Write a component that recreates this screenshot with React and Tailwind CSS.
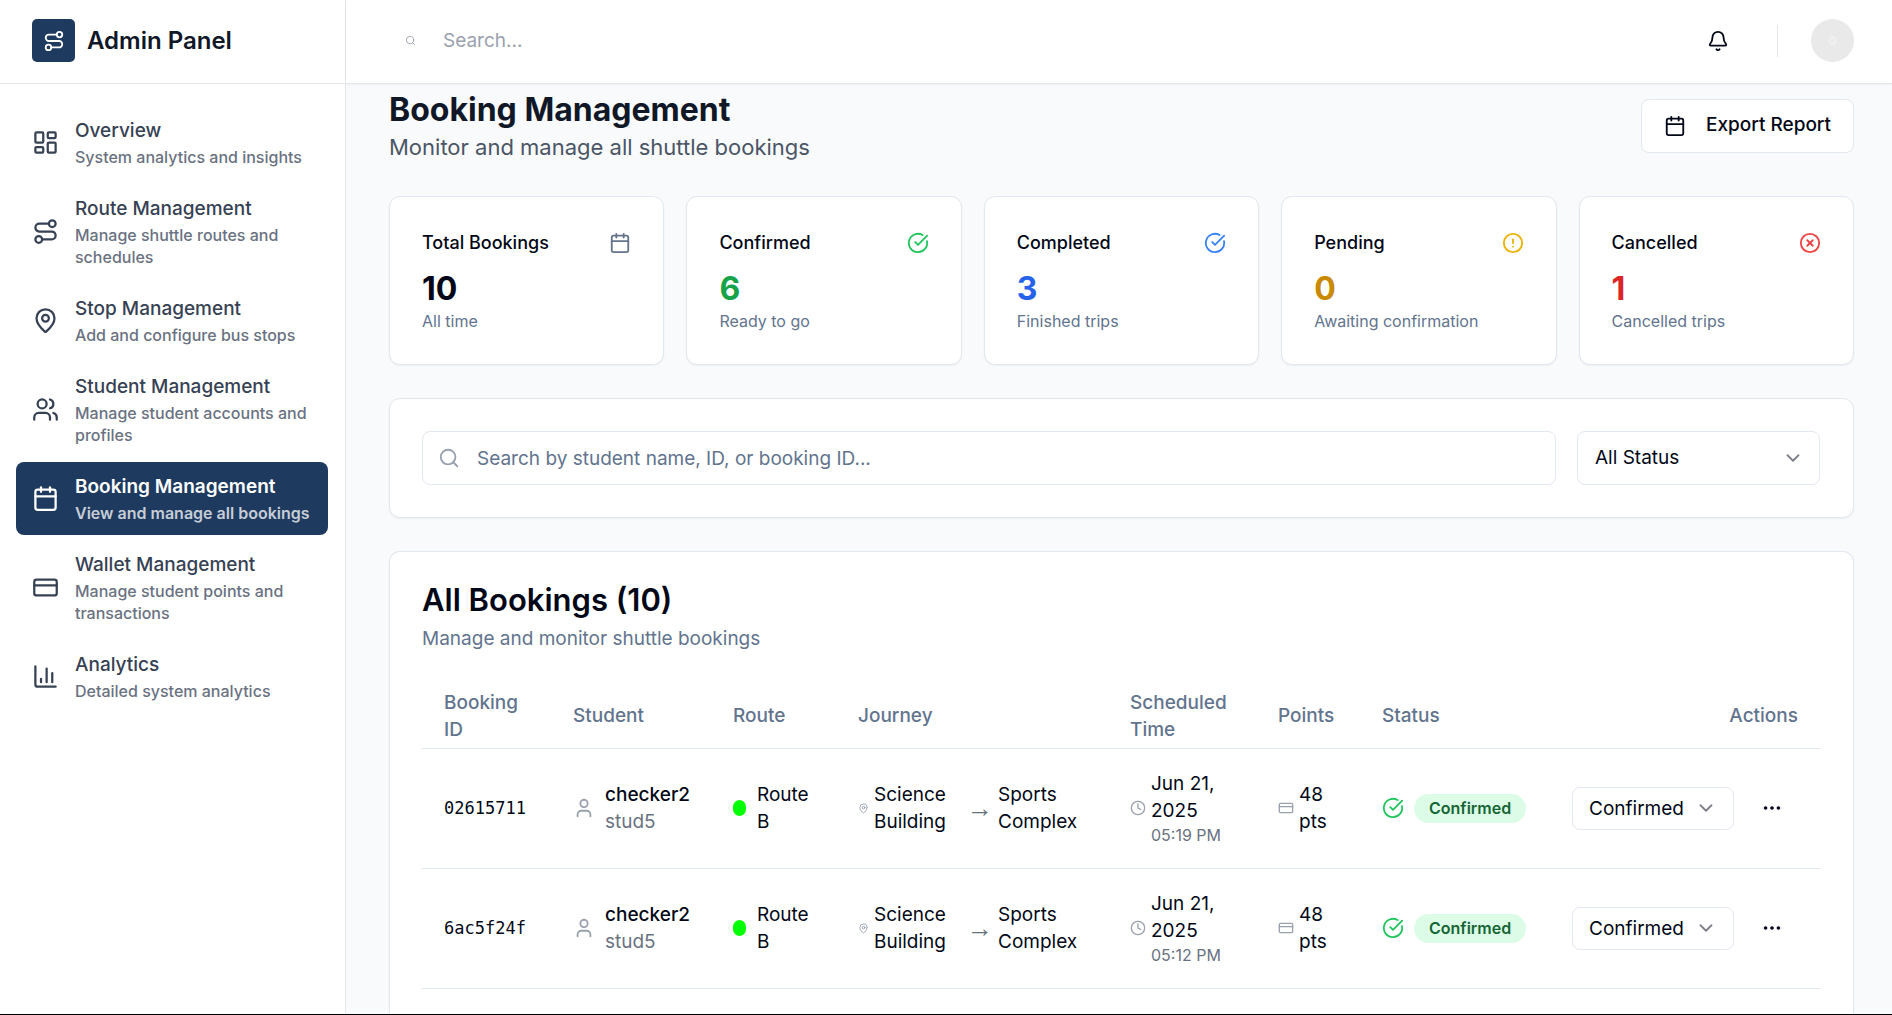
import React from "react";
import {
  LayoutDashboard,
  Route,
  MapPin,
  Users,
  User,
  Calendar,
  CreditCard,
  ChartColumn,
  Search,
  Bell,
  CircleCheckBig,
  CircleAlert,
  CircleX,
  ChevronDown,
  Clock,
  Ellipsis,
} from "lucide-react";

const NAV = [
  { title: "Overview", text: "System analytics and insights", icon: LayoutDashboard },
  { title: "Route Management", text: "Manage shuttle routes and schedules", icon: Route },
  { title: "Stop Management", text: "Add and configure bus stops", icon: MapPin },
  { title: "Student Management", text: "Manage student accounts and profiles", icon: Users },
  { title: "Booking Management", text: "View and manage all bookings", icon: Calendar, active: true },
  { title: "Wallet Management", text: "Manage student points and transactions", icon: CreditCard },
  { title: "Analytics", text: "Detailed system analytics", icon: ChartColumn },
];

const STATS = [
  { title: "Total Bookings", value: "10", note: "All time", icon: Calendar, iconColor: "text-[#64748b]", color: "text-[#020817]" },
  { title: "Confirmed", value: "6", note: "Ready to go", icon: CircleCheckBig, iconColor: "text-[#22c55e]", color: "text-[#16a34a]" },
  { title: "Completed", value: "3", note: "Finished trips", icon: CircleCheckBig, iconColor: "text-[#3b82f6]", color: "text-[#2563eb]" },
  { title: "Pending", value: "0", note: "Awaiting confirmation", icon: CircleAlert, iconColor: "text-[#eab308]", color: "text-[#ca8a04]" },
  { title: "Cancelled", value: "1", note: "Cancelled trips", icon: CircleX, iconColor: "text-[#ef4444]", color: "text-[#dc2626]" },
];

const BOOKINGS = [
  { id: "02615711", name: "checker2", student: "stud5", route: "Route B", from: "Science Building", to: "Sports Complex", date: "Jun 21, 2025", time: "05:19 PM", points: 48 },
  { id: "6ac5f24f", name: "checker2", student: "stud5", route: "Route B", from: "Science Building", to: "Sports Complex", date: "Jun 21, 2025", time: "05:12 PM", points: 48 },
];

const COLUMNS = [
  { label: "Booking ID", width: "w-[129px]" },
  { label: "Student", width: "w-[160px]" },
  { label: "Route", width: "w-[125px]" },
  { label: "Journey", width: "w-auto" },
  { label: "Scheduled Time", width: "w-[148px]" },
  { label: "Points", width: "w-[104px]" },
  { label: "Status", width: "w-[190px]" },
  { label: "Actions", width: "w-[270px]", right: true },
];

function Sidebar() {
  return (
    <aside className="flex w-[346px] shrink-0 flex-col border-r border-gray-200 bg-white">
      <div className="flex h-[84px] shrink-0 items-center gap-3 border-b border-gray-200 px-8 pb-[2px]">
        <div className="flex size-[43px] items-center justify-center rounded-[5px] bg-[#1e3a5f] text-white">
          <Route size={22} />
        </div>
        <span className="text-[24px] leading-8 font-semibold text-gray-900">Admin Panel</span>
      </div>
      <nav aria-label="Admin" className="flex flex-col gap-[5px] px-4 pt-[22px] pr-[17px]">
        {NAV.map(({ title, text, icon: Icon, active }) => (
          <a
            key={title}
            href="#"
            aria-current={active ? "page" : undefined}
            className={
              "flex items-center gap-4 rounded-lg py-[11px] pl-4 " +
              (active ? "bg-[#1e3a5f] text-white font-semibold" : "text-gray-700 font-medium")
            }
          >
            <Icon size={27} className="shrink-0" />
            <span className="flex min-w-0 flex-1 flex-col gap-[2px]">
              <span className="text-[19px] leading-[27px]">{title}</span>
              <span className={"text-[16px] leading-[22px] " + (active ? "text-white/75" : "text-gray-500")}>
                {text}
              </span>
            </span>
          </a>
        ))}
      </nav>
    </aside>
  );
}

function TopBar() {
  return (
    <header className="z-10 flex h-[84px] shrink-0 items-center border-b border-gray-200 bg-white pr-[38px] pb-[2px] pl-[59px] shadow-xs">
      <label className="flex flex-1 items-center gap-[27px] text-gray-400">
        <Search size={11} className="shrink-0" />
        <input
          type="text"
          aria-label="Search"
          placeholder="Search..."
          className="w-full bg-transparent text-[19px] leading-[27px] outline-none placeholder:text-gray-400"
        />
      </label>
      <div className="flex items-center">
        <button type="button" aria-label="Notifications" className="flex size-[54px] items-center justify-center text-[#020817]">
          <Bell size={22} />
        </button>
        <div className="mr-[33px] ml-8 h-8 w-px bg-gray-200" />
        <button type="button" aria-label="Account" className="flex size-[43px] items-center justify-center rounded-full bg-[#e9e9e9]">
          <span className="size-[9px] rounded-full border-[3px] border-[#efefef]" />
        </button>
      </div>
    </header>
  );
}

function StatCard({ title, value, note, icon: Icon, iconColor, color }) {
  return (
    <div className="rounded-[11px] border border-slate-200 bg-white p-8 shadow-xs">
      <div className="flex items-center justify-between pb-[11px]">
        <h3 className="text-[18px] leading-[27px] font-medium text-[#020817]">{title}</h3>
        <Icon size={22} className={iconColor} />
      </div>
      <p className={"text-[32px] leading-[43px] font-bold " + color}>{value}</p>
      <p className="text-[16px] leading-[22px] text-slate-500">{note}</p>
    </div>
  );
}

function BookingRow({ b }) {
  return (
    <tr className="h-[120px] border-b border-slate-200">
      <td className="px-[22px] font-['DejaVu_Sans_Mono',monospace] text-[17px]">{b.id}</td>
      <td className="px-[22px]">
        <div className="flex items-center gap-[10px]">
          <User size={22} className="shrink-0 text-gray-400" />
          <div>
            <p className="font-medium">{b.name}</p>
            <p className="text-gray-500">{b.student}</p>
          </div>
        </div>
      </td>
      <td className="px-[22px]">
        <div className="flex items-center gap-[11px]">
          <span className="h-4 w-[13px] shrink-0 rounded-full bg-[#00ff00]" />
          <span className="w-[60px]">{b.route}</span>
        </div>
      </td>
      <td className="px-[22px]">
        <div className="flex items-center gap-[5px]">
          <MapPin size={11} className="shrink-0 text-gray-400" />
          <span className="w-[88px] shrink-0">{b.from}</span>
          <span className="w-[26px] shrink-0 font-['Liberation_Sans',sans-serif] text-[26px] text-gray-500">→</span>
          <span>{b.to}</span>
        </div>
      </td>
      <td className="px-[22px]">
        <div className="flex items-center gap-[5px]">
          <Clock size={16} className="shrink-0 text-gray-400" />
          <div>
            <p>{b.date}</p>
            <p className="text-[16px] leading-[22px] text-gray-500">{b.time}</p>
          </div>
        </div>
      </td>
      <td className="px-[22px]">
        <div className="flex items-center gap-[5px]">
          <CreditCard size={16} className="shrink-0 text-gray-400" />
          <span>{b.points} pts</span>
        </div>
      </td>
      <td className="px-[22px]">
        <div className="flex items-center gap-[10px]">
          <CircleCheckBig size={22} className="shrink-0 text-[#22c55e]" />
          <span className="rounded-full bg-[#dcfce7] px-[15px] py-[3px] text-[16px] leading-[23px] font-semibold text-[#166534]">
            Confirmed
          </span>
        </div>
      </td>
      <td className="px-[22px]">
        <div className="flex items-center justify-end gap-[11px]">
          <div className="relative">
            <select
              aria-label={"Status of booking " + b.id}
              className="h-[43px] w-[162px] appearance-none rounded-[8px] border border-slate-200 bg-white px-4 text-[19px] text-[#020817]"
            >
              <option>Confirmed</option>
              <option>Completed</option>
              <option>Pending</option>
              <option>Cancelled</option>
            </select>
            <ChevronDown size={22} className="pointer-events-none absolute top-1/2 right-[17px] -translate-y-1/2 opacity-50" />
          </div>
          <button type="button" aria-label={"More actions for booking " + b.id} className="flex h-12 w-[54px] items-center justify-center">
            <Ellipsis size={22} />
          </button>
        </div>
      </td>
    </tr>
  );
}

export default function App() {
  return (
    <div className="flex h-screen overflow-hidden border-b border-black bg-[#f9fafc] font-['Inter',sans-serif] text-[#020817]">
      <Sidebar />
      <div className="flex min-w-0 flex-1 flex-col">
        <TopBar />
        <main className="flex min-h-0 flex-1 flex-col gap-[33px] pt-1 pr-[38px] pl-[43px]">
          <div className="flex shrink-0 items-center justify-between">
            <div>
              <h1 className="text-[32px] leading-[43px] font-bold text-gray-900">Booking Management</h1>
              <p className="text-[22px] leading-8 text-gray-600">Monitor and manage all shuttle bookings</p>
            </div>
            <button
              type="button"
              className="flex h-[54px] items-center gap-5 rounded-[8px] border border-slate-200 bg-white px-[22px] text-[19px] font-medium"
            >
              <Calendar size={22} />
              Export Report
            </button>
          </div>

          <section aria-label="Booking totals" className="grid shrink-0 grid-cols-5 gap-[22px]">
            {STATS.map((s) => (
              <StatCard key={s.title} {...s} />
            ))}
          </section>

          <section aria-label="Filters" className="flex shrink-0 gap-[21px] rounded-[11px] border border-slate-200 bg-white py-8 pr-[33px] pl-8 shadow-xs">
            <div className="relative flex-1">
              <Search size={22} className="pointer-events-none absolute top-1/2 left-4 -translate-y-1/2 text-gray-400" />
              <input
                type="text"
                aria-label="Search bookings"
                placeholder="Search by student name, ID, or booking ID..."
                className="h-[54px] w-full rounded-[8px] border border-slate-200 bg-white pr-4 pl-[54px] text-[19px] placeholder:text-slate-500"
              />
            </div>
            <div className="relative">
              <select
                aria-label="Status filter"
                className="h-[54px] w-[243px] appearance-none rounded-[8px] border border-slate-200 bg-white px-[17px] text-[19px] text-[#020817]"
              >
                <option>All Status</option>
                <option>Confirmed</option>
                <option>Completed</option>
                <option>Pending</option>
                <option>Cancelled</option>
              </select>
              <ChevronDown size={22} className="pointer-events-none absolute top-1/2 right-4 -translate-y-1/2 opacity-50" />
            </div>
          </section>

          <section className="min-h-0 flex-1 overflow-hidden rounded-t-[11px] border border-b-0 border-slate-200 bg-white pt-8 pr-[33px] pl-8 shadow-xs">
            <h2 className="text-[31px] leading-8 font-semibold">All Bookings (10)</h2>
            <p className="mt-[9px] text-[19px] leading-[27px] text-slate-500">Manage and monitor shuttle bookings</p>
            <table className="mt-8 w-full table-fixed text-[19px] leading-[27px]">
              <thead>
                <tr className="h-16 border-b border-slate-200 text-slate-500">
                  {COLUMNS.map((c) => (
                    <th
                      key={c.label}
                      scope="col"
                      className={c.width + " px-[22px] font-medium " + (c.right ? "text-right" : "text-left")}
                    >
                      {c.label}
                    </th>
                  ))}
                </tr>
              </thead>
              <tbody>
                {BOOKINGS.map((b) => (
                  <BookingRow key={b.id} b={b} />
                ))}
              </tbody>
            </table>
          </section>
        </main>
      </div>
    </div>
  );
}
